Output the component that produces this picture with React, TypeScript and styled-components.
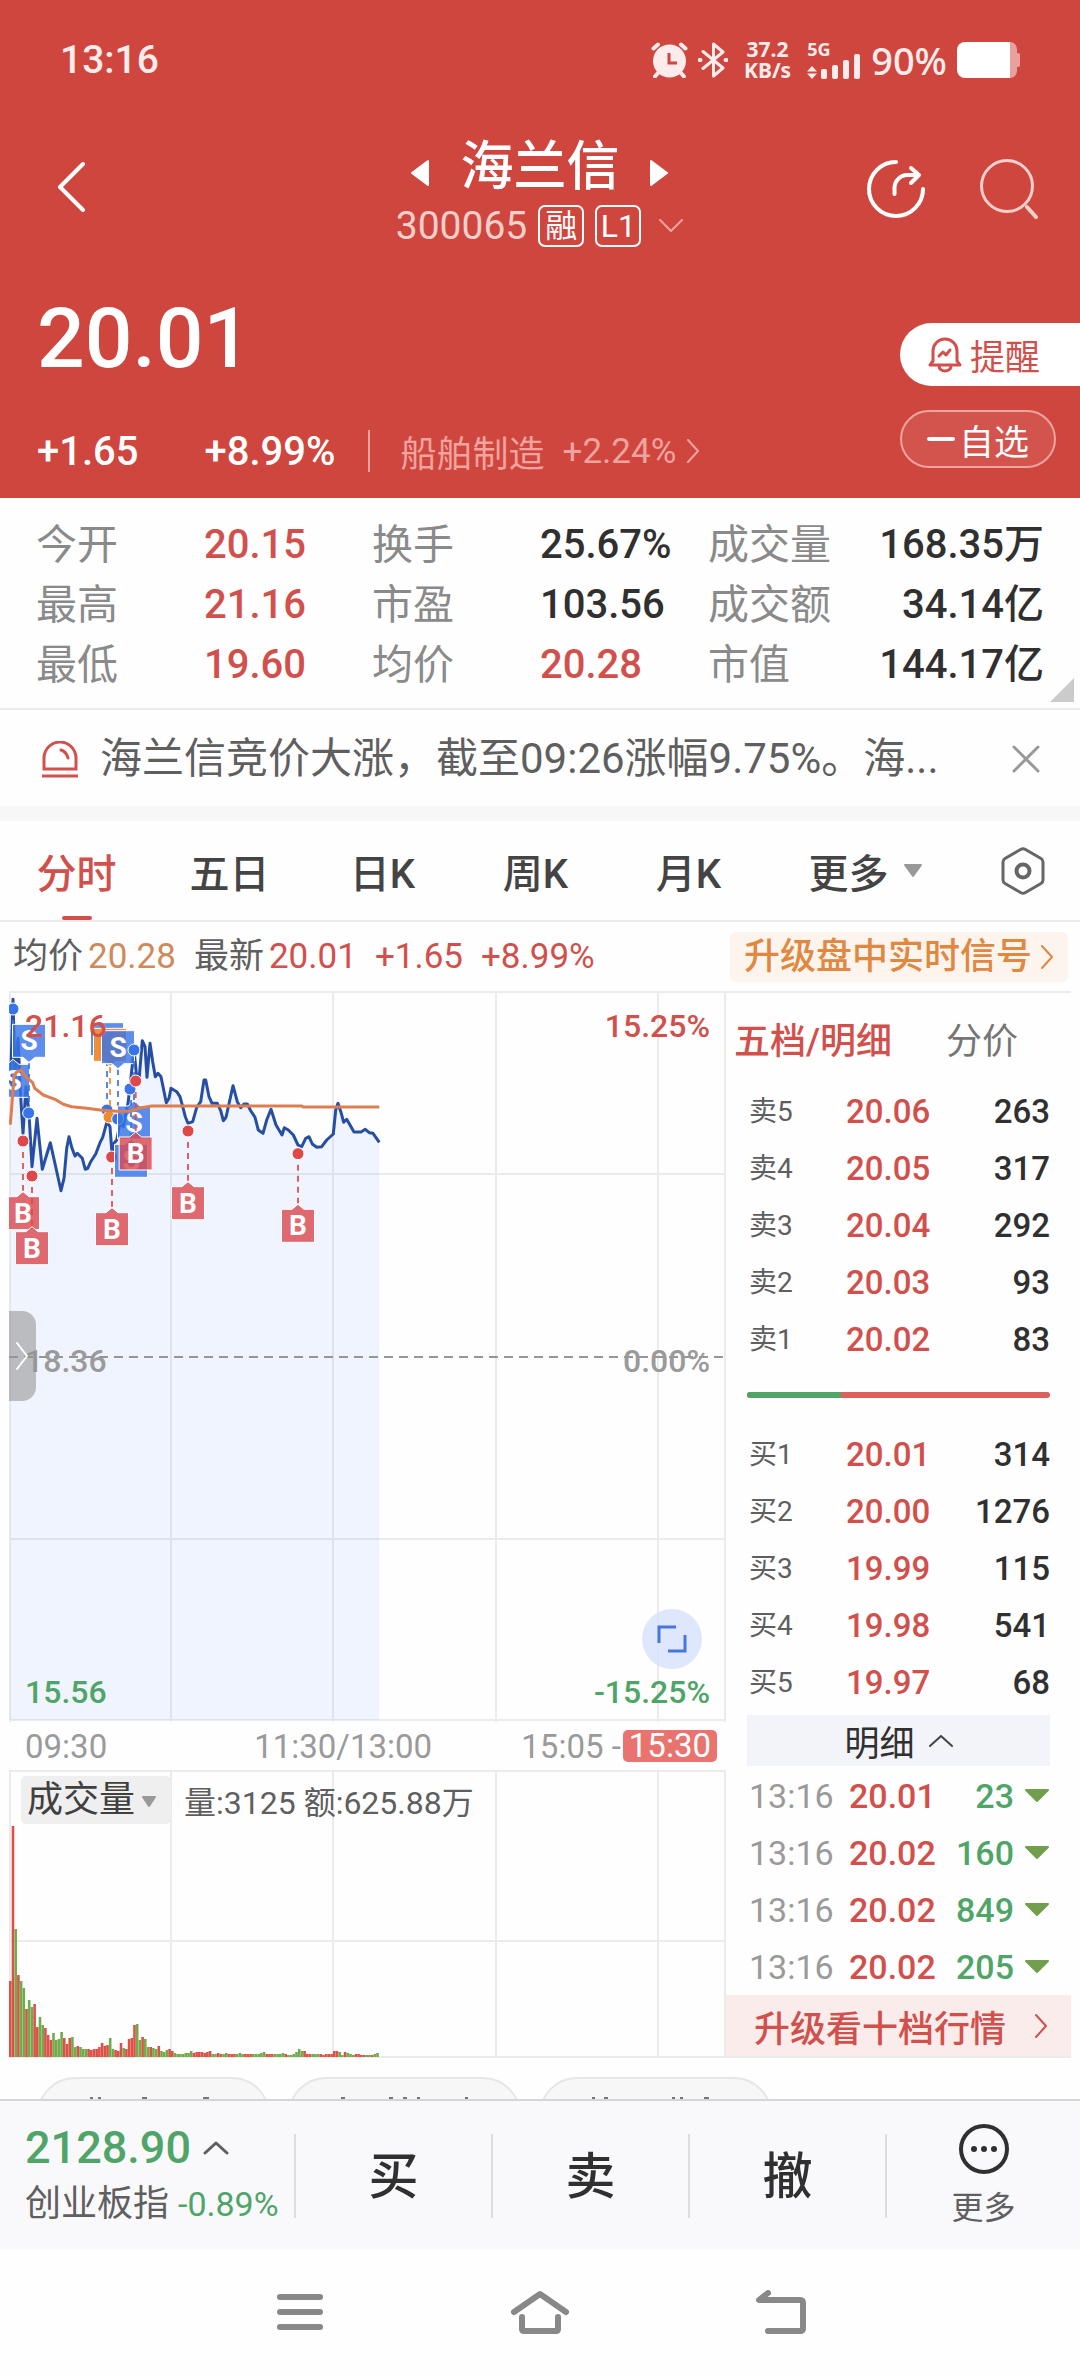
import React from "react";
import styled, { createGlobalStyle, css } from "styled-components";

const color = {
  brand: "#cf463e",
  up: "#d2504c",
  down: "#4fa567",
  ink: "#303030",
  text: "#5f5f5f",
  muted: "#8a8a8a",
  faint: "#9a9a9a",
  line: "#ebebeb",
  blush: "#f9cfcc",
  pink: "#f0a39f",
  orange: "#e0883f",
};

const GlobalStyle = createGlobalStyle`
  *, *::before, *::after { box-sizing: border-box; }
  body {
    margin: 0;
    background: #fefefe;
    color: ${color.ink};
    font-family: Roboto, "Noto Sans CJK SC", sans-serif;
    font-size: 36px;
  }
  button, select { font: inherit; color: inherit; border: 0; padding: 0; margin: 0; background: none; }
  svg { display: block; flex: none; }
  table { border-collapse: collapse; width: 100%; }
  td, th { padding: 0; font-weight: 400; text-align: left; }
  dl, dd, dt, p, h1 { margin: 0; font-weight: inherit; font-size: inherit; }
`;

const Page = styled.div`
  min-height: 100vh;
  display: flex;
  flex-direction: column;
`;

/* ---------- header ---------- */

const Header = styled.header`
  background: ${color.brand};
  color: #fff;
`;

const StatusBar = styled.div`
  height: 120px;
  padding: 0 60px;
  display: flex;
  align-items: center;
  justify-content: space-between;
  color: #fdeceb;
`;

const Clock = styled.time`
  font-size: 39px;
  font-weight: 500;
`;

const StatusIcons = styled.div`
  display: flex;
  align-items: center;
  gap: 10px;
  font-family: "Noto Sans", sans-serif;
`;

const Speed = styled.span`
  padding: 0 6px;
  display: grid;
  justify-items: center;
  font-size: 21px;
  line-height: 21px;
  font-weight: 700;
`;

const Network = styled.span`
  display: grid;
  gap: 1px;
  font-size: 18px;
  line-height: 16px;
  font-weight: 700;
`;

const Percent = styled.span`
  font-size: 38px;
  line-height: 40px;
  font-weight: 500;
`;

const NavBar = styled.nav`
  height: 136px;
  padding: 2px 40px 0;
  display: grid;
  grid-template-columns: 1fr auto 1fr;
  align-items: center;
`;

const IconButton = styled.button`
  display: inline-flex;
  align-items: center;
  justify-content: center;
  min-width: 60px;
  min-height: 60px;
`;

const NavActions = styled.div`
  justify-self: end;
  display: flex;
  gap: 54px;
`;

const TitleBlock = styled.div`
  display: grid;
  justify-items: center;
  gap: 6px;
  padding-top: 8px;
`;

const TitleRow = styled.div`
  display: flex;
  align-items: center;
  gap: 30px;
`;

const StepButton = styled.button`
  display: flex;
  padding-top: 12px;
`;

const Title = styled.h1`
  font-size: 53px;
  line-height: 60px;
  font-weight: 500;
`;

const CodeRow = styled.div`
  display: flex;
  align-items: center;
  gap: 11px;
  font-size: 39px;
  line-height: 46px;
  color: ${color.blush};
`;

const Badge = styled.span`
  width: 46px;
  height: 42px;
  border: 2px solid #fff;
  border-radius: 7px;
  display: flex;
  align-items: center;
  justify-content: center;
  font-size: 32px;
  line-height: 36px;
  color: #fff;
`;

const ChevronSlot = styled.button`
  display: flex;
  padding-left: 6px;
`;

const PriceBlock = styled.section`
  display: flex;
  justify-content: space-between;
  padding: 38px 0 17px 37px;
`;

const BigPrice = styled.p`
  font-size: 84px;
  line-height: 90px;
  font-weight: 500;
`;

const ChangeRow = styled.div`
  margin-top: 37px;
  height: 60px;
  display: flex;
  align-items: center;
  font-size: 40px;
  font-weight: 500;
`;

const ChangePercent = styled.span`
  margin-left: 66px;
  padding-right: 32px;
`;

const SectorLink = styled.a`
  height: 42px;
  padding-left: 31px;
  border-left: 2px solid ${color.pink};
  display: flex;
  align-items: center;
  gap: 10px;
  font-size: 36px;
  font-weight: 400;
  color: ${color.pink};
  text-decoration: none;
`;

const SectorRate = styled.span`
  padding-left: 8px;
  font-size: 35px;
`;

const PriceActions = styled.div`
  padding-top: 29px;
  display: flex;
  flex-direction: column;
  gap: 24px;
`;

const RemindButton = styled.button`
  width: 180px;
  height: 63px;
  padding-left: 28px;
  display: flex;
  align-items: center;
  gap: 8px;
  border-radius: 32px 0 0 32px;
  background: #fff;
  color: ${color.up};
  font-size: 35px;
`;

const WatchButton = styled.button`
  width: 156px;
  height: 58px;
  display: flex;
  align-items: center;
  justify-content: center;
  gap: 4px;
  border: 2px solid ${color.pink};
  border-radius: 29px;
  background: rgba(255, 255, 255, 0.08);
  color: #fff;
  font-size: 35px;
`;

/* ---------- key figures ---------- */

const Stats = styled.dl`
  position: relative;
  padding: 17px 36px 13px;
  border-bottom: 2px solid ${color.line};
  display: grid;
  grid-template-columns: 1fr 1fr 1fr;
`;

const Stat = styled.div`
  display: grid;
  grid-template-columns: 1fr 1fr;
  align-items: center;
  height: 60px;

  &:nth-child(3n) {
    grid-template-columns: auto 1fr;
  }
  &:nth-child(3n) dd {
    text-align: right;
  }
`;

const StatName = styled.dt`
  font-size: 41px;
  line-height: 60px;
  color: ${color.muted};
`;

const StatValue = styled.dd<{ $up?: boolean }>`
  font-size: 40px;
  line-height: 60px;
  font-weight: 500;
  white-space: nowrap;
  color: ${(p) => (p.$up ? color.up : color.ink)};
`;

const ExpandCorner = styled.button`
  position: absolute;
  right: 6px;
  bottom: 6px;
  border-left: 24px solid transparent;
  border-bottom: 24px solid #cbcbcb;
`;

const Notice = styled.section`
  height: 111px;
  padding: 2px 40px 0 42px;
  border-bottom: 15px solid #f7f7f7;
  display: flex;
  align-items: center;
  gap: 22px;
`;

const NoticeText = styled.p`
  flex: 1;
  overflow: hidden;
  white-space: nowrap;
  font-size: 42px;
  line-height: 60px;
  color: ${color.text};
`;

/* ---------- tabs ---------- */

const Tabs = styled.div`
  height: 101px;
  border-bottom: 2px solid ${color.line};
  display: grid;
  grid-template-columns: repeat(5, 153fr) 201fr 114fr;
`;

const Tab = styled.button<{ $active?: boolean }>`
  position: relative;
  display: flex;
  align-items: center;
  justify-content: center;
  gap: 14px;
  font-size: 40px;
  font-weight: 500;
  color: ${(p) => (p.$active ? color.up : "#444")};

  ${(p) =>
    p.$active &&
    css`
      &::after {
        content: "";
        position: absolute;
        left: 50%;
        bottom: 0;
        width: 30px;
        height: 4px;
        margin-left: -15px;
        border-radius: 2px;
        background: ${color.up};
      }
    `}
`;

const InfoRow = styled.div`
  height: 69px;
  padding: 0 12px 0 13px;
  display: flex;
  align-items: center;
  justify-content: space-between;
`;

const Quotes = styled.div`
  display: flex;
  align-items: baseline;
  gap: 18px;
  font-size: 35px;
  line-height: 50px;
  color: ${color.up};
  white-space: nowrap;
`;

const Caption = styled.span`
  padding-right: 5px;
  color: ${color.text};
`;

const Tint = styled.span<{ $color: string }>`
  color: ${(p) => p.$color};
`;

const SignalLink = styled.a`
  height: 50px;
  padding: 0 14px;
  display: flex;
  align-items: center;
  gap: 8px;
  border-radius: 6px;
  background: #fdf4ee;
  color: ${color.orange};
  font-weight: 500;
  line-height: 46px;
  text-decoration: none;
  white-space: nowrap;
`;

/* ---------- board ---------- */

const Board = styled.main`
  margin: 0 9px;
  border-top: 2px solid ${color.line};
  display: grid;
  grid-template-columns: minmax(0, 1fr) 345px;
`;

const Charts = styled.div`
  display: flex;
  flex-direction: column;
`;

const Plot = styled.div`
  position: relative;

  > svg {
    width: 100%;
    height: auto;
  }
`;

const SideHandle = styled.button`
  position: absolute;
  left: 0;
  top: 318px;
  width: 27px;
  height: 90px;
  display: flex;
  align-items: center;
  justify-content: center;
  border-radius: 0 14px 14px 0;
  background: rgba(150, 150, 150, 0.6);
`;

const FullButton = styled.button`
  position: absolute;
  right: 24px;
  bottom: 53px;
  width: 60px;
  height: 60px;
  display: flex;
  align-items: center;
  justify-content: center;
  border-radius: 50%;
  background: rgba(214, 225, 250, 0.8);
`;

const TimeAxis = styled.div`
  height: 48px;
  padding: 0 9px 0 16px;
  display: grid;
  grid-template-columns: 229fr 267fr auto;
  align-items: center;
  font-size: 33px;
  color: ${color.faint};
`;

const AfterHours = styled.span`
  display: flex;
  align-items: center;
  gap: 2px;
`;

const TimeTag = styled.span`
  height: 32px;
  padding: 0 6px;
  border-radius: 5px;
  line-height: 32px;
  background: #e9736f;
  color: #fff;
`;

const VolumeHeader = styled.div`
  position: absolute;
  top: 6px;
  left: 12px;
  display: flex;
  align-items: center;
  gap: 13px;
  font-size: 32px;
  color: ${color.text};
  white-space: nowrap;
`;

const SelectBox = styled.label`
  position: relative;
  height: 48px;
  border-radius: 5px;
  background: #efefef;
  color: #404040;
  font-size: 36px;

  select {
    appearance: none;
    width: 150px;
    height: 48px;
    padding: 0 34px 0 6px;
    line-height: 48px;
  }
  svg {
    position: absolute;
    right: 14px;
    top: 20px;
    pointer-events: none;
  }
`;

const Panel = styled.aside`
  display: flex;
  flex-direction: column;
  border-bottom: 2px solid ${color.line};
`;

const PanelTabs = styled.div`
  height: 90px;
  padding: 0 53px 0 8px;
  display: flex;
  align-items: center;
  justify-content: space-between;
`;

const PanelTab = styled.button<{ $active?: boolean }>`
  font-size: 36px;
  font-weight: ${(p) => (p.$active ? 500 : 400)};
  color: ${(p) => (p.$active ? color.up : "#757575")};
`;

const PanelBody = styled.div`
  padding: 0 21px;
`;

const LevelTable = styled.table`
  tr {
    height: 57px;
  }
  th {
    width: 99px;
    padding-left: 2px;
    font-size: 28px;
    line-height: 40px;
    color: ${color.text};
  }
  td {
    font-size: 33px;
    line-height: 40px;
    font-weight: 500;
    color: ${color.up};
  }
  td:last-child {
    text-align: right;
    color: ${color.ink};
  }
`;

const Ratio = styled.div`
  height: 6px;
  margin: 24px 0 28px;
  border-radius: 3px;
  overflow: hidden;
  display: grid;
  grid-template-columns: 31fr 69fr;
  background: #dc5f59;

  &::before {
    content: "";
    background: ${color.down};
  }
`;

const DetailToggle = styled.button`
  width: 100%;
  height: 51px;
  margin: 4px 0 1px;
  display: flex;
  align-items: center;
  justify-content: center;
  gap: 14px;
  background: #f3f4f9;
  font-size: 35px;
`;

const TickTable = styled.table`
  tr {
    height: 57px;
  }
  td {
    font-size: 34px;
    line-height: 40px;
  }
`;

const TickTime = styled.td`
  width: 102px;
  padding-left: 2px;
  color: ${color.faint};
`;

const TickPrice = styled.td`
  font-weight: 500;
  color: ${color.up};
`;

const TickVolume = styled.td`
  font-weight: 500;
  color: ${color.down};

  > span {
    display: flex;
    align-items: center;
    justify-content: flex-end;
    gap: 10px;
  }
`;

const UpgradeLink = styled.a`
  height: 61px;
  padding: 0 23px 0 28px;
  display: flex;
  align-items: center;
  justify-content: space-between;
  background: #fbecec;
  color: ${color.up};
  font-weight: 500;
  text-decoration: none;
`;

/* ---------- bottom ---------- */

const ChipRow = styled.div`
  flex: 1 0 41px;
  max-height: 41px;
  padding: 19px 37px 0;
  overflow: hidden;
  display: flex;
  gap: 18px;
`;

const Chip = styled.button`
  width: 233px;
  height: 76px;
  padding-top: 18px;
  display: flex;
  justify-content: center;
  border: 2px solid #e6e6e6;
  border-radius: 38px;
  background: #f7f7f7;
`;

const TradeBar = styled.footer`
  height: 151px;
  border-top: 2px solid #d3d5d9;
  background: #f9f9fc;
  display: grid;
  grid-template-columns: 294fr 197fr 197fr 197fr 195fr;
  align-items: center;
`;

const IndexCell = styled.button`
  padding-left: 25px;
  display: grid;
  gap: 6px;
  text-align: left;
  white-space: nowrap;
`;

const IndexPrice = styled.span`
  display: flex;
  align-items: center;
  gap: 12px;
  font-size: 45px;
  line-height: 50px;
  font-weight: 500;
  color: ${color.down};
`;

const IndexName = styled.span`
  display: flex;
  align-items: center;
  gap: 9px;
  font-size: 36px;
  line-height: 50px;
  color: ${color.text};
`;

const IndexRate = styled.span`
  font-size: 34px;
  color: ${color.down};
`;

const TradeButton = styled.button`
  height: 84px;
  padding-top: 3px;
  border-left: 2px solid #dcdde1;
  font-size: 50px;
  line-height: 81px;
  font-weight: 500;
`;

const MoreButton = styled.button`
  height: 84px;
  border-left: 2px solid #dcdde1;
  display: flex;
  flex-direction: column;
  align-items: center;
  justify-content: center;
  gap: 14px;
  font-size: 32px;
  line-height: 40px;
  color: ${color.text};
`;

const SystemNav = styled.nav`
  height: 126px;
  padding: 0 180px;
  display: grid;
  grid-template-columns: repeat(3, 1fr);
  justify-items: center;
  align-items: center;
`;

/* ---------- small drawings ---------- */

type ChevronProps = { d: string; w: number; h: number; stroke: string; sw?: number };

const Chevron = ({ d, w, h, stroke, sw = 2 }: ChevronProps) => (
  <svg width={w} height={h} viewBox={`0 0 ${w} ${h}`} fill="none" stroke={stroke} strokeWidth={sw} strokeLinecap="round" strokeLinejoin="round" aria-hidden="true">
    <path d={d} />
  </svg>
);

const Triangle = ({ w, h, d, fill }: { w: number; h: number; d: string; fill: string }) => (
  <svg width={w} height={h} viewBox={`0 0 ${w} ${h}`} fill={fill} stroke={fill} strokeWidth="2" strokeLinejoin="round" aria-hidden="true">
    <path d={d} />
  </svg>
);

const AlarmIcon = () => (
  <svg width="37" height="36" viewBox="0 0 37 36" aria-hidden="true">
    <circle cx="18.500" cy="19" r="16.500" fill="#fdeceb" />
    <g fill="none" stroke="#fdeceb" strokeWidth="4" strokeLinecap="round">
      <path d="M2.500 6.500 7 2.500M30 2.500l4.500 4M7 31l-3 3.500M30 31l3 3.500" />
    </g>
    <path d="M18 11v10h8" fill="none" stroke={color.brand} strokeWidth="3" />
  </svg>
);

const BluetoothIcon = () => (
  <svg width="30" height="36" viewBox="0 0 30 36" fill="none" stroke="#fdeceb" strokeWidth="3" strokeLinejoin="round" strokeLinecap="round" aria-hidden="true">
    <path d="M5 9.500 25 26l-9.500 8V2L25 10 5 26.500" />
    <path d="M1.500 18h1M27.500 18h1" strokeWidth="4" />
  </svg>
);

const SignalIcon = () => (
  <svg width="54" height="36" viewBox="0 0 54 36" fill="#fdeceb" aria-hidden="true">
    <path d="M0 28.500 5 23l5 5.500zM0 30.500h10L5 36z" />
    <rect x="14" y="26" width="6" height="10" rx="2" />
    <rect x="25" y="22" width="6" height="14" rx="2" />
    <rect x="36" y="17" width="6" height="19" rx="2" />
    <rect x="47" y="11" width="6" height="25" rx="2" />
  </svg>
);

const SignalStack = styled.span`
  display: block;
  margin-top: -15px;
`;

const BatteryIcon = () => (
  <svg width="63" height="36" viewBox="0 0 63 36" aria-hidden="true">
    <path d="M50 0h3a7 7 0 0 1 7 7v4h1a2 2 0 0 1 2 2v10a2 2 0 0 1-2 2h-1v4a7 7 0 0 1-7 7h-3z" fill="#e9a09d" />
    <path d="M8 0h45v36H8a8 8 0 0 1-8-8V8a8 8 0 0 1 8-8z" fill="#fff" />
  </svg>
);

const ShareIcon = () => (
  <svg width="60" height="60" viewBox="0 0 60 60" fill="none" stroke="#fff" strokeWidth="4" strokeLinecap="round" strokeLinejoin="round" aria-hidden="true">
    <path d="M30 3A27 27 0 1 0 57 30" />
    <path d="M28.500 35V29a13 13 0 0 1 13-13H52M45 9l8 7-8 8" />
  </svg>
);

const SearchIcon = () => (
  <svg width="60" height="60" viewBox="0 0 60 60" fill="none" stroke={color.blush} strokeWidth="3" strokeLinecap="round" aria-hidden="true">
    <circle cx="27" cy="27" r="25.500" />
    <path d="m47 48 9 10" strokeWidth="4" />
  </svg>
);

const BellIcon = () => (
  <svg width="34" height="36" viewBox="0 0 34 36" fill="none" stroke={color.up} strokeWidth="3" strokeLinejoin="round" strokeLinecap="round" aria-hidden="true">
    <path d="M5 24V14a12 12 0 0 1 24 0v10l3 4H2zM11 29a6 5 0 0 0 12 0" />
    <path d="m11 19 4-4 3 3 4-5" />
  </svg>
);

const SirenIcon = () => (
  <svg width="36" height="37" viewBox="0 0 36 37" fill="none" stroke={color.up} strokeWidth="3" aria-hidden="true">
    <path d="M2 28V17a16 16 0 0 1 32 0v11zM0 35h36" />
    <path d="M19 9c3 1 6 4 7 8" strokeLinecap="round" />
  </svg>
);

const GearIcon = () => (
  <svg width="44" height="48" viewBox="0 0 44 48" fill="none" stroke="#666" strokeWidth="3" strokeLinejoin="round" aria-hidden="true">
    <path d="M19.500 2.500q2.500-1.500 5 0l15.500 9q2 1.200 2 3.500v18q0 2.300-2 3.500l-15.500 9q-2.500 1.500-5 0l-15.500-9q-2-1.200-2-3.500V15q0-2.300 2-3.500z" />
    <circle cx="22" cy="24" r="6.500" strokeWidth="4" />
  </svg>
);

const ExpandIcon = () => (
  <svg width="30" height="30" viewBox="0 0 30 30" fill="none" stroke="#4676e0" strokeWidth="3" aria-hidden="true">
    <path d="M2 19V3h17M28 11v16H11" />
  </svg>
);

const MoreIcon = () => (
  <svg width="50" height="50" viewBox="0 0 50 50" aria-hidden="true">
    <circle cx="25" cy="25" r="23" fill="none" stroke="#303030" strokeWidth="4" />
    <circle cx="15" cy="25" r="3" fill="#303030" />
    <circle cx="25" cy="25" r="3" fill="#303030" />
    <circle cx="35" cy="25" r="3" fill="#303030" />
  </svg>
);

const SystemIcon = ({ d }: { d: string }) => (
  <svg width="60" height="46" viewBox="0 0 60 46" fill="none" stroke="#888" strokeWidth="6" strokeLinecap="round" strokeLinejoin="round" aria-hidden="true">
    <path d={d} />
  </svg>
);

/* ---------- chart data ---------- */

type Point = [number, number];

// Samples are stored at three units per pixel, measured from the plot origin below.
const ORIGIN_X = 27;
const ORIGIN_Y = 39;
const px = (x: number) => (x - ORIGIN_X) / 3;
const py = (y: number) => (y - ORIGIN_Y) / 3;
const toPath = (points: Point[]) =>
  points.map(([x, y], i) => `${i ? "L" : "M"}${px(x).toFixed(1)} ${py(y).toFixed(1)}`).join("");

const PRICE: Point[] = [
  [31, 330], [39, 58], [45, 300], [54, 175], [62, 350], [69, 460], [78, 320], [87, 400], [96, 560], [111, 415],
  [127, 568], [151, 488], [166, 555], [183, 632], [192, 595], [200, 505], [207, 470], [216, 505], [225, 528],
  [232, 520], [247, 535], [256, 568], [263, 565], [272, 545], [287, 522], [300, 488], [308, 472], [321, 425],
  [330, 440], [336, 520], [342, 490], [350, 480], [360, 430], [370, 440], [384, 370], [392, 300], [402, 210],
  [410, 290], [418, 290], [427, 182], [435, 200], [441, 292], [450, 190], [458, 245], [466, 290], [474, 280],
  [483, 290], [491, 330], [499, 368], [507, 355], [513, 325], [530, 335], [540, 350], [548, 380], [556, 410],
  [564, 430], [578, 425], [590, 382], [602, 365], [612, 300], [617, 300], [627, 350], [636, 370], [652, 370],
  [662, 392], [670, 422], [678, 412], [699, 317], [712, 365], [722, 383], [732, 372], [742, 372], [752, 392],
  [765, 412], [775, 450], [789, 460], [800, 420], [813, 388], [828, 435], [846, 465], [853, 443], [865, 450],
  [880, 465], [894, 495], [905, 500], [917, 475], [927, 470], [937, 492], [950, 502], [965, 500], [980, 480],
  [1000, 462], [1007, 390], [1014, 370], [1024, 400], [1031, 427], [1040, 418], [1062, 456], [1083, 456],
  [1096, 448], [1108, 458], [1119, 460], [1138, 487],
];

const AVERAGE: Point[] = [
  [31, 434], [36, 370], [42, 290], [48, 278], [64, 270], [75, 288], [98, 308], [104, 325], [130, 345],
  [165, 358], [190, 373], [215, 380], [260, 385], [300, 390], [350, 394], [390, 394], [420, 384], [455, 378],
  [905, 378], [910, 381], [1138, 381],
];

const RED = "rgba(219, 74, 82, 0.82)";
const BLUE = "rgba(57, 117, 232, 0.82)";
const AMBER = "#ee8f3c";

type Trade = {
  kind: "B" | "S" | "";
  fill: string;
  x: number;
  top: number;
  tip: "up" | "down";
  dot?: Point;
  dotFill?: string;
};

const TRADES: Trade[] = [
  { kind: "", fill: BLUE, x: 321, top: 128, tip: "down", dot: [321, 390], dotFill: "#3975ea" },
  { kind: "", fill: AMBER, x: 330, top: 145, tip: "down", dot: [327, 411], dotFill: "#f08a2c" },
  { kind: "S", fill: BLUE, x: 354, top: 152, tip: "down", dot: [353, 417], dotFill: "#3975ea" },
  { kind: "S", fill: BLUE, x: 39, top: 253, tip: "up", dot: [39, 87], dotFill: "#3975ea" },
  { kind: "S", fill: BLUE, x: 87, top: 133, tip: "down", dot: [86, 399], dotFill: "#3975ea" },
  { kind: "B", fill: RED, x: 69, top: 650, tip: "up", dot: [69, 483], dotFill: "#df4848" },
  { kind: "B", fill: RED, x: 96, top: 755, tip: "up", dot: [96, 588], dotFill: "#df4848" },
  { kind: "B", fill: RED, x: 336, top: 698, tip: "up", dot: [335, 531], dotFill: "#df4848" },
  { kind: "S", fill: BLUE, x: 402, top: 378, tip: "up", dot: [402, 210], dotFill: "#3975ea" },
  { kind: "S", fill: BLUE, x: 393, top: 493, tip: "up", dot: [390, 327], dotFill: "#3975ea" },
  { kind: "B", fill: RED, x: 407, top: 471, tip: "up", dot: [407, 303], dotFill: "#df4848" },
  { kind: "B", fill: RED, x: 564, top: 620, tip: "up", dot: [564, 453], dotFill: "#df4848" },
  { kind: "B", fill: RED, x: 894, top: 688, tip: "up", dot: [894, 521], dotFill: "#df4848" },
];

const TradeMark = ({ t }: { t: Trade }) => {
  const cx = px(t.x);
  const top = py(t.top);
  const l = cx - 16.5;
  const r = cx + 16.5;
  const b = top + 33;
  const flag =
    t.tip === "up"
      ? `M${l} ${top}H${cx - 6}L${cx} ${top - 5}L${cx + 6} ${top}H${r}V${b}H${l}Z`
      : `M${l} ${top}H${r}V${b}H${cx + 6}L${cx} ${b + 5}L${cx - 6} ${b}H${l}Z`;
  const from = t.dot ? py(t.dot[1]) + (t.tip === "up" ? 11 : -11) : 0;
  return (
    <g>
      {t.dot && (
        <>
          <line x1={cx} x2={cx} y1={from} y2={t.tip === "up" ? top - 6 : b + 6} stroke={t.dotFill} strokeWidth="2" strokeDasharray="6 5" opacity="0.85" />
          <circle cx={px(t.dot[0])} cy={py(t.dot[1])} r="6" fill={t.dotFill} stroke="#fff" strokeWidth="1" />
        </>
      )}
      <path d={flag} fill={t.fill} stroke="#fff" strokeWidth="1" />
      {t.kind && (
        <text x={cx} y={top + 26} textAnchor="middle" fontSize="28" fontWeight="700" fill="#fff">
          {t.kind}
        </text>
      )}
    </g>
  );
};

const GRID_X = [162, 324, 487, 649];

const PriceChart = () => (
  <svg viewBox="0 0 717 729" fontFamily="Roboto, sans-serif" role="img" aria-label="分时走势">
    <g stroke={color.line} strokeWidth="2" fill="none">
      <path d="M1 0V729M716 0V729M0 181H717M0 546H717M0 727H717" />
      {GRID_X.map((x) => (
        <path key={x} d={`M${x} 0V729`} />
      ))}
    </g>
    <path d={`${toPath(PRICE)}V727H1Z`} fill="rgba(80, 140, 250, 0.085)" />
    <path d="M0 364H717" stroke="#969696" strokeWidth="2" strokeDasharray="9 6" />
    <g fontSize="32" fontWeight="500">
      <text x="16" y="379" fill={color.faint}>18.36</text>
      <text x="701" y="379" fill={color.faint} textAnchor="end">0.00%</text>
      <text x="16" y="710" fill={color.down}>15.56</text>
      <text x="701" y="710" fill={color.down} textAnchor="end">-15.25%</text>
      <text x="701" y="44" fill={color.up} textAnchor="end">15.25%</text>
    </g>
    <path d={toPath(PRICE)} fill="none" stroke="#264fa3" strokeWidth="3" strokeLinejoin="round" />
    {TRADES.map((t) => (
      <TradeMark key={`${t.x}-${t.top}`} t={t} />
    ))}
    <path d={toPath(AVERAGE)} fill="none" stroke="#dd7e50" strokeWidth="3" strokeLinejoin="round" />
    <text x="16" y="44" fontSize="32" fontWeight="500" fill={color.up}>21.16</text>
  </svg>
);

// One bar per minute: the letter is the side, the number is the bar height.
const VOLUME =
  "r76 r231 g128 r82 g76 g69 r48 g57 g50 r53 r30 g40 g32 r29 r22 r17 g24 g17 g18 g25 r19 r13 r19 g20 g10 r11 g10 g8 g8 r8 r7 r8 r8 r10 r14 r11 r12 g19 g8 r7 r6 r14 g9 r8 r18 r19 r32 g33 g17 r20 g18 g10 r10 g9 g8 r11 g6 g5 g7 r8 r6 g4 g3 g3 g3 g4 g4 g6 r4 r5 r5 r5 r4 r5 r6 g3 g3 r4 r3 g3 g4 r3 r3 r3 g3 g4 g3 r3 r3 r3 g3 g3 g3 g4 g5 r3 r3 r3 g3 g3 g3 g4 r3 g2 g2 g3 g5 g8 g6 r6 r3 r3 g3 g3 g3 r3 r2 r3 r3 r3 r6 r6 g5 g2 r5 g4 g3 g2 r3 r3 r2 r2 g2 g2 r2 g3 g4"
    .split(" ")
    .map((s) => ({ side: s[0], h: Number(s.slice(1)) }));

const VolumeChart = () => (
  <svg viewBox="0 0 717 288" role="img" aria-label="成交量">
    <g stroke={color.line} strokeWidth="2" fill="none">
      <path d="M1 0V288M716 0V288M0 1H717M0 171H717M0 287H717" />
      {GRID_X.map((x) => (
        <path key={x} d={`M${x} 0V288`} />
      ))}
    </g>
    {VOLUME.map(({ side, h }, i) => (
      <rect key={i} x={i * 2.7} y={287 - h} width="2.600" height={h} fill={side === "r" ? "#dc5248" : "#72ab4b"} />
    ))}
  </svg>
);

/* ---------- content ---------- */

const STATS: [string, string, boolean][] = [
  ["今开", "20.15", true],
  ["换手", "25.67%", false],
  ["成交量", "168.35万", false],
  ["最高", "21.16", true],
  ["市盈", "103.56", false],
  ["成交额", "34.14亿", false],
  ["最低", "19.60", true],
  ["均价", "20.28", true],
  ["市值", "144.17亿", false],
];

const ASKS = [
  ["卖5", "20.06", "263"],
  ["卖4", "20.05", "317"],
  ["卖3", "20.04", "292"],
  ["卖2", "20.03", "93"],
  ["卖1", "20.02", "83"],
];

const BIDS = [
  ["买1", "20.01", "314"],
  ["买2", "20.00", "1276"],
  ["买3", "19.99", "115"],
  ["买4", "19.98", "541"],
  ["买5", "19.97", "68"],
];

const TICKS = [
  ["13:16", "20.01", "23"],
  ["13:16", "20.02", "160"],
  ["13:16", "20.02", "849"],
  ["13:16", "20.02", "205"],
];

// Upper edges of the glyphs that peek out above the trade bar.
const CHIP_MARKS = ["M0 1h3M8 1h3M52 1h5M113 1h6", "M0 1h4M48 1h4M62 1h4M76 1h3M124 1h3", "M0 1h3M12 1h4M80 1h3M88 1h3M112 1h5"];

const Levels = ({ rows, label }: { rows: string[][]; label: string }) => (
  <LevelTable aria-label={label}>
    <tbody>
      {rows.map(([name, price, volume]) => (
        <tr key={name}>
          <th scope="row">{name}</th>
          <td>{price}</td>
          <td>{volume}</td>
        </tr>
      ))}
    </tbody>
  </LevelTable>
);

export default function App() {
  return (
    <Page>
      <GlobalStyle />
      <Header>
        <StatusBar>
          <Clock>13:16</Clock>
          <StatusIcons>
            <AlarmIcon />
            <BluetoothIcon />
            <Speed>
              <span>37.2</span>
              <span>KB/s</span>
            </Speed>
            <Network>
              5G
              <SignalStack>
                <SignalIcon />
              </SignalStack>
            </Network>
            <Percent>90%</Percent>
            <BatteryIcon />
          </StatusIcons>
        </StatusBar>
        <NavBar>
          <div>
            <IconButton aria-label="返回">
              <Chevron w={30} h={50} d="M28 2 5 25l23 23" stroke="#fff" sw={4} />
            </IconButton>
          </div>
          <TitleBlock>
            <TitleRow>
              <StepButton aria-label="上一只">
                <Triangle w={20} h={28} d="M18 2v24L2 14z" fill="#fff" />
              </StepButton>
              <Title>海兰信</Title>
              <StepButton aria-label="下一只">
                <Triangle w={20} h={28} d="M2 2v24l16-12z" fill="#fff" />
              </StepButton>
            </TitleRow>
            <CodeRow>
              300065
              <Badge>融</Badge>
              <Badge>L1</Badge>
              <ChevronSlot aria-label="展开">
                <Chevron w={26} h={14} d="M2 1l11 11L24 1" stroke={color.pink} />
              </ChevronSlot>
            </CodeRow>
          </TitleBlock>
          <NavActions>
            <IconButton aria-label="分享">
              <ShareIcon />
            </IconButton>
            <IconButton aria-label="搜索">
              <SearchIcon />
            </IconButton>
          </NavActions>
        </NavBar>
        <PriceBlock>
          <div>
            <BigPrice>20.01</BigPrice>
            <ChangeRow>
              <span>+1.65</span>
              <ChangePercent>+8.99%</ChangePercent>
              <SectorLink href="#sector">
                船舶制造
                <SectorRate>+2.24%</SectorRate>
                <Chevron w={14} h={24} d="M2 1l10 11L2 23" stroke={color.pink} />
              </SectorLink>
            </ChangeRow>
          </div>
          <PriceActions>
            <RemindButton>
              <BellIcon />
              提醒
            </RemindButton>
            <WatchButton>
              <Chevron w={28} h={6} d="M2 3h24" stroke="#fff" sw={4} />
              自选
            </WatchButton>
          </PriceActions>
        </PriceBlock>
      </Header>

      <Stats>
        {STATS.map(([name, value, up]) => (
          <Stat key={name}>
            <StatName>{name}</StatName>
            <StatValue $up={up}>{value}</StatValue>
          </Stat>
        ))}
        <ExpandCorner aria-label="更多指标" />
      </Stats>

      <Notice>
        <SirenIcon />
        <NoticeText>海兰信竞价大涨，截至09:26涨幅9.75%。海...</NoticeText>
        <button aria-label="关闭">
          <Chevron w={28} h={28} d="M2 2l24 24M26 2 2 26" stroke="#999" sw={3} />
        </button>
      </Notice>

      <Tabs>
        <Tab $active>分时</Tab>
        <Tab>五日</Tab>
        <Tab>日K</Tab>
        <Tab>周K</Tab>
        <Tab>月K</Tab>
        <Tab>
          更多
          <Triangle w={20} h={13} d="M2 1h16l-8 11z" fill="#999" />
        </Tab>
        <Tab aria-label="设置">
          <GearIcon />
        </Tab>
      </Tabs>

      <InfoRow>
        <Quotes>
          <Tint $color="#cf8a5c">
            <Caption>均价</Caption>
            20.28
          </Tint>
          <span>
            <Caption>最新</Caption>
            20.01
          </span>
          <span>+1.65</span>
          <span>+8.99%</span>
        </Quotes>
        <SignalLink href="#signal">
          升级盘中实时信号
          <Chevron w={14} h={24} d="M2 1l10 11L2 23" stroke={color.orange} />
        </SignalLink>
      </InfoRow>

      <Board>
        <Charts>
          <Plot>
            <PriceChart />
            <SideHandle aria-label="展开侧栏">
              <Chevron w={15} h={30} d="M2 2l10 13L2 28" stroke="#fff" />
            </SideHandle>
            <FullButton aria-label="全屏">
              <ExpandIcon />
            </FullButton>
          </Plot>
          <TimeAxis>
            <span>09:30</span>
            <span>11:30/13:00</span>
            <AfterHours>
              15:05 -<TimeTag>15:30</TimeTag>
            </AfterHours>
          </TimeAxis>
          <Plot>
            <VolumeChart />
            <VolumeHeader>
              <SelectBox>
                <select aria-label="指标">
                  <option>成交量</option>
                </select>
                <Triangle w={16} h={12} d="M2 1h12l-6 9z" fill="#999" />
              </SelectBox>
              <span>量:3125 额:625.88万</span>
            </VolumeHeader>
          </Plot>
        </Charts>

        <Panel>
          <PanelTabs>
            <PanelTab $active>五档/明细</PanelTab>
            <PanelTab>分价</PanelTab>
          </PanelTabs>
          <PanelBody>
            <Levels rows={ASKS} label="卖盘" />
            <Ratio />
            <Levels rows={BIDS} label="买盘" />
            <DetailToggle>
              明细
              <Chevron w={24} h={14} d="M1 12 12 2l11 10" stroke="#444" />
            </DetailToggle>
            <TickTable aria-label="明细">
              <tbody>
                {TICKS.map(([time, price, volume]) => (
                  <tr key={volume}>
                    <TickTime>{time}</TickTime>
                    <TickPrice>{price}</TickPrice>
                    <TickVolume>
                      <span>
                        {volume}
                        <Triangle w={26} h={14} d="M2 1h22L13 12z" fill="#729f4e" />
                      </span>
                    </TickVolume>
                  </tr>
                ))}
              </tbody>
            </TickTable>
          </PanelBody>
          <UpgradeLink href="#upgrade">
            升级看十档行情
            <Chevron w={14} h={24} d="M2 1l10 11L2 23" stroke={color.up} />
          </UpgradeLink>
        </Panel>
      </Board>

      <ChipRow>
        {CHIP_MARKS.map((d) => (
          <Chip key={d} aria-label="功能">
            <svg width="128" height="2" viewBox="0 0 128 2" aria-hidden="true">
              <path d={d} stroke="#777" strokeWidth="2" />
            </svg>
          </Chip>
        ))}
      </ChipRow>

      <TradeBar>
        <IndexCell>
          <IndexPrice>
            2128.90
            <Chevron w={26} h={14} d="M2 12 13 2l11 10" stroke={color.text} sw={3} />
          </IndexPrice>
          <IndexName>
            创业板指
            <IndexRate>-0.89%</IndexRate>
          </IndexName>
        </IndexCell>
        <TradeButton>买</TradeButton>
        <TradeButton>卖</TradeButton>
        <TradeButton>撤</TradeButton>
        <MoreButton>
          <MoreIcon />
          更多
        </MoreButton>
      </TradeBar>

      <SystemNav>
        <IconButton aria-label="最近任务">
          <SystemIcon d="M10 7h40M10 22h40M10 37h40" />
        </IconButton>
        <IconButton aria-label="主屏幕">
          <SystemIcon d="M4 22 30 4l26 18M12 27v12q0 2 2 2h32q2 0 2-2V27" />
        </IconButton>
        <IconButton aria-label="返回上级">
          <SystemIcon d="M18 3 9 10h41q3 0 3 3v25q0 3-3 3H18" />
        </IconButton>
      </SystemNav>
    </Page>
  );
}
